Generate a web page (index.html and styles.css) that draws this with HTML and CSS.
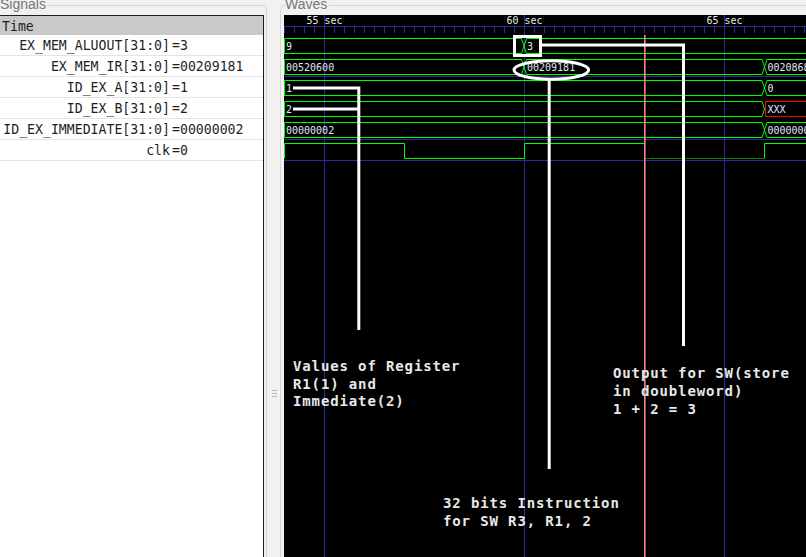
FILE: index.html
```html
<!DOCTYPE html>
<html>
<head>
<meta charset="utf-8">
<title>GTKWave</title>
<link rel="stylesheet" href="styles.css">
</head>
<body>
<div class="app">
  <section class="pane pane-signals">
    <div class="pane-head">
      <span class="pane-label">Signals</span>
      <span class="rule rule-right"></span>
    </div>
    <div class="pane-body body-signals">
      <div class="siglist">
        <div class="sig-header">Time</div>
        <div class="sig-row"><span class="sig-name">EX_MEM_ALUOUT[31:0]</span><span class="sig-val">=3</span></div>
        <div class="sig-row"><span class="sig-name">EX_MEM_IR[31:0]</span><span class="sig-val">=00209181</span></div>
        <div class="sig-row"><span class="sig-name">ID_EX_A[31:0]</span><span class="sig-val">=1</span></div>
        <div class="sig-row"><span class="sig-name">ID_EX_B[31:0]</span><span class="sig-val">=2</span></div>
        <div class="sig-row"><span class="sig-name">ID_EX_IMMEDIATE[31:0]</span><span class="sig-val">=00000002</span></div>
        <div class="sig-row"><span class="sig-name">clk</span><span class="sig-val">=0</span></div>
      </div>
    </div>
  </section>

  <div class="splitter"><span class="grip"><i></i><i></i><i></i></span></div>

  <section class="pane pane-waves">
    <div class="pane-head">
      <span class="rule rule-left"></span>
      <span class="pane-label">Waves</span>
      <span class="rule rule-plain"></span>
    </div>
    <div class="pane-body body-waves">
      <div class="canvas">
        <svg class="wave-svg" width="522" height="542" viewBox="0 0 522 542" xmlns="http://www.w3.org/2000/svg">
          <!-- ruler -->
          <g class="grid">
            <path d="M0 11.5 H522"/>
            <path d="M0.5 11.5V18 M10.5 11.5V18 M20.5 11.5V18 M30.5 11.5V18 M50.5 11.5V18 M60.5 11.5V18 M70.5 11.5V18 M80.5 11.5V18 M90.5 11.5V18 M100.5 11.5V18 M110.5 11.5V18 M120.5 11.5V18 M130.5 11.5V18 M140.5 11.5V18 M150.5 11.5V18 M160.5 11.5V18 M170.5 11.5V18 M180.5 11.5V18 M190.5 11.5V18 M200.5 11.5V18 M210.5 11.5V18 M220.5 11.5V18 M230.5 11.5V18 M250.5 11.5V18 M260.5 11.5V18 M270.5 11.5V18 M280.5 11.5V18 M290.5 11.5V18 M300.5 11.5V18 M310.5 11.5V18 M320.5 11.5V18 M330.5 11.5V18 M340.5 11.5V18 M350.5 11.5V18 M360.5 11.5V18 M370.5 11.5V18 M380.5 11.5V18 M390.5 11.5V18 M400.5 11.5V18 M410.5 11.5V18 M420.5 11.5V18 M430.5 11.5V18 M450.5 11.5V18 M460.5 11.5V18 M470.5 11.5V18 M480.5 11.5V18 M490.5 11.5V18 M500.5 11.5V18 M510.5 11.5V18 M520.5 11.5V18"/>
            <path d="M40.5 0V542 M240.5 0V542 M440.5 0V542"/>
            <path d="M0 61.5H522 M0 124.5H522 M0 145.5H522"/>
          </g>
          <text class="ruler-label" x="40.5" y="9">55 sec</text>
          <text class="ruler-label" x="240.5" y="9">60 sec</text>
          <text class="ruler-label" x="440.5" y="9">65 sec</text>

          <!-- bus traces -->
          <g class="trace">
            <path d="M0.5 23.5 H237.5 L240 31 L237.5 38.5 H0.5 Z"/>
            <path d="M530 23.5 H242.5 L240 31 L242.5 38.5 H530"/>

            <path d="M0.5 44.5 H237.5 L240 52 L237.5 59.5 H0.5 Z"/>
            <path d="M242.5 44.5 H478 L480.5 52 L478 59.5 H242.5 L240 52 Z"/>
            <path d="M530 44.5 H483 L480.5 52 L483 59.5 H530"/>

            <path d="M0.5 65.5 H478 L480.5 73 L478 80.5 H0.5 Z"/>
            <path d="M530 65.5 H483 L480.5 73 L483 80.5 H530"/>

            <path d="M0.5 86.5 H478 L480.5 94 L478 101.5 H0.5 Z"/>

            <path d="M0.5 107.5 H478 L480.5 115 L478 122.5 H0.5 Z"/>
            <path d="M530 107.5 H483 L480.5 115 L483 122.5 H530"/>

            <path d="M0.5 143.5 V128.5 H120.5 V143.5 H240.5 V128.5 H360.5 V143.5"/>
            <path d="M480.5 143.5 V128.5 H530"/>
          </g>
          <path class="trace-low" d="M360.5 143.5 H480.5"/>
          <path class="trace-x" d="M530 86.5 H481.5 V101.5 H530"/>

          <text class="val" x="2" y="35">9</text>
          <text class="val" x="243" y="35">3</text>
          <text class="val" x="2" y="56">00520600</text>
          <text class="val" x="243" y="56">00209181</text>
          <text class="val" x="483.5" y="56">00208680</text>
          <text class="val" x="2" y="77">1</text>
          <text class="val" x="483.5" y="77">0</text>
          <text class="val" x="2" y="98">2</text>
          <text class="val" x="483.5" y="98">XXX</text>
          <text class="val" x="2" y="119">00000002</text>
          <text class="val" x="483.5" y="119">00000000</text>

          <!-- cursor -->
          <path class="cursor" d="M360.8 20 V542"/>

          <!-- annotations -->
          <g class="mark">
            <path d="M9 73 H76.3 M9 94 H76.3 M74.8 71.5 V315"/>
            <rect x="230.5" y="21.5" width="26" height="19"/>
            <path d="M256.5 30 H401 M399.5 28.5 V331"/>
            <ellipse cx="267.3" cy="55" rx="37.3" ry="9.3"/>
            <path d="M265.2 64 V454"/>
          </g>
          <text class="annot" x="9" y="356">Values of Register</text>
          <text class="annot" x="9" y="373.7">R1(1) and</text>
          <text class="annot" x="9" y="391.4">Immediate(2)</text>
          <text class="annot" x="329" y="363.3">Output for SW(store</text>
          <text class="annot" x="329" y="381">in doubleword)</text>
          <text class="annot" x="329" y="398.7">1 + 2 = 3</text>
          <text class="annot" x="159" y="493.3">32 bits Instruction</text>
          <text class="annot" x="159" y="511">for SW R3, R1, 2</text>
        </svg>
      </div>
    </div>
  </section>
</div>
</body>
</html>
```
FILE: styles.css
```css
html, body {
  margin: 0;
  padding: 0;
}
body {
  background: #f2f1f0;
  width: 806px;
  height: 557px;
  overflow: hidden;
  font-family: "DejaVu Sans Mono", monospace;
}
.app {
  display: flex;
  width: 806px;
  height: 557px;
  overflow: hidden;
}
.pane {
  display: flex;
  flex-direction: column;
  min-height: 0;
}
.pane-signals {
  width: 267px;
  flex: none;
}
.pane-waves {
  flex: 1;
  min-width: 0;
}
.pane-head {
  height: 15px;
  display: flex;
  align-items: flex-start;
  flex: none;
}
.pane-label {
  font-family: "Liberation Sans", Arial, sans-serif;
  font-size: 14px;
  line-height: 14px;
  margin-top: -3px;
  color: #6f7780;
  white-space: nowrap;
}
.rule {
  margin-top: 5px;
  height: 10px;
  border-top: 1px solid #d6d6d6;
  box-sizing: border-box;
}
.rule-right {
  flex: 1;
  margin-left: 1px;
  border-right: 1px solid #d6d6d6;
  border-top-right-radius: 5px;
}
.rule-left {
  width: 5px;
  flex: none;
  border-left: 1px solid #d6d6d6;
  border-top-left-radius: 5px;
}
.rule-plain {
  flex: 1;
  margin-left: 2px;
}
.pane-body {
  flex: 1;
  display: flex;
  min-height: 0;
}
.body-signals {
  border-right: 1px solid #d6d6d6;
}
.body-waves {
  border-left: 1px solid #d6d6d6;
  padding-left: 3px;
}
.siglist {
  width: 264px;
  flex: none;
  box-sizing: border-box;
  background: #ffffff;
  border-top: 1px solid #1e1e1e;
  border-right: 1px solid #1e1e1e;
  font-family: "DejaVu Sans Mono", monospace;
  font-size: 13.2px;
  color: #1f1f1f;
}
.sig-header {
  height: 19px;
  box-sizing: border-box;
  padding: 2px 0 0 2px;
  line-height: 18px;
  background: #c9c9c9;
}
.sig-row {
  display: flex;
  height: 21px;
  box-sizing: border-box;
  padding-top: 2px;
  line-height: 18px;
  border-bottom: 1px solid #e4e4e4;
  white-space: nowrap;
}
.sig-name {
  width: 170px;
  flex: none;
  text-align: right;
}
.sig-val {
  margin-left: 2px;
}
.splitter {
  width: 13px;
  flex: none;
  display: flex;
  justify-content: center;
  align-items: flex-start;
  padding-top: 390px;
  box-sizing: border-box;
}
.grip {
  display: flex;
  flex-direction: column;
  gap: 2px;
  margin-left: 1px;
}
.grip i {
  display: block;
  width: 5px;
  height: 1px;
  background: #b8b8b8;
}
.canvas {
  flex: 1;
  background: #000000;
  overflow: hidden;
  min-width: 0;
}
.wave-svg {
  display: block;
}
.grid path {
  fill: none;
  stroke: #2a2a9c;
  stroke-width: 1;
  shape-rendering: crispEdges;
}
.trace path {
  fill: none;
  stroke: #00ff00;
  stroke-width: 1;
}
.trace-low {
  fill: none;
  stroke: #0a7a0a;
  stroke-width: 1;
  shape-rendering: crispEdges;
}
.trace-x {
  fill: none;
  stroke: #ff0000;
  stroke-width: 1;
  shape-rendering: crispEdges;
}
.cursor {
  fill: none;
  stroke: #ff8080;
  stroke-width: 1.6;
}
.ruler-label {
  font-family: "DejaVu Sans Mono", monospace;
  font-size: 10px;
  fill: #e6e6e6;
  text-anchor: middle;
}
.val {
  font-family: "DejaVu Sans Mono", monospace;
  font-size: 10px;
  fill: #e2e6f6;
}
.mark path, .mark rect, .mark ellipse {
  fill: none;
  stroke: #ffffff;
  stroke-width: 3;
}
.annot {
  font-family: "DejaVu Sans Mono", monospace;
  font-weight: bold;
  font-size: 14px;
  letter-spacing: 0.87px;
  fill: #e8e8e8;
}
```
